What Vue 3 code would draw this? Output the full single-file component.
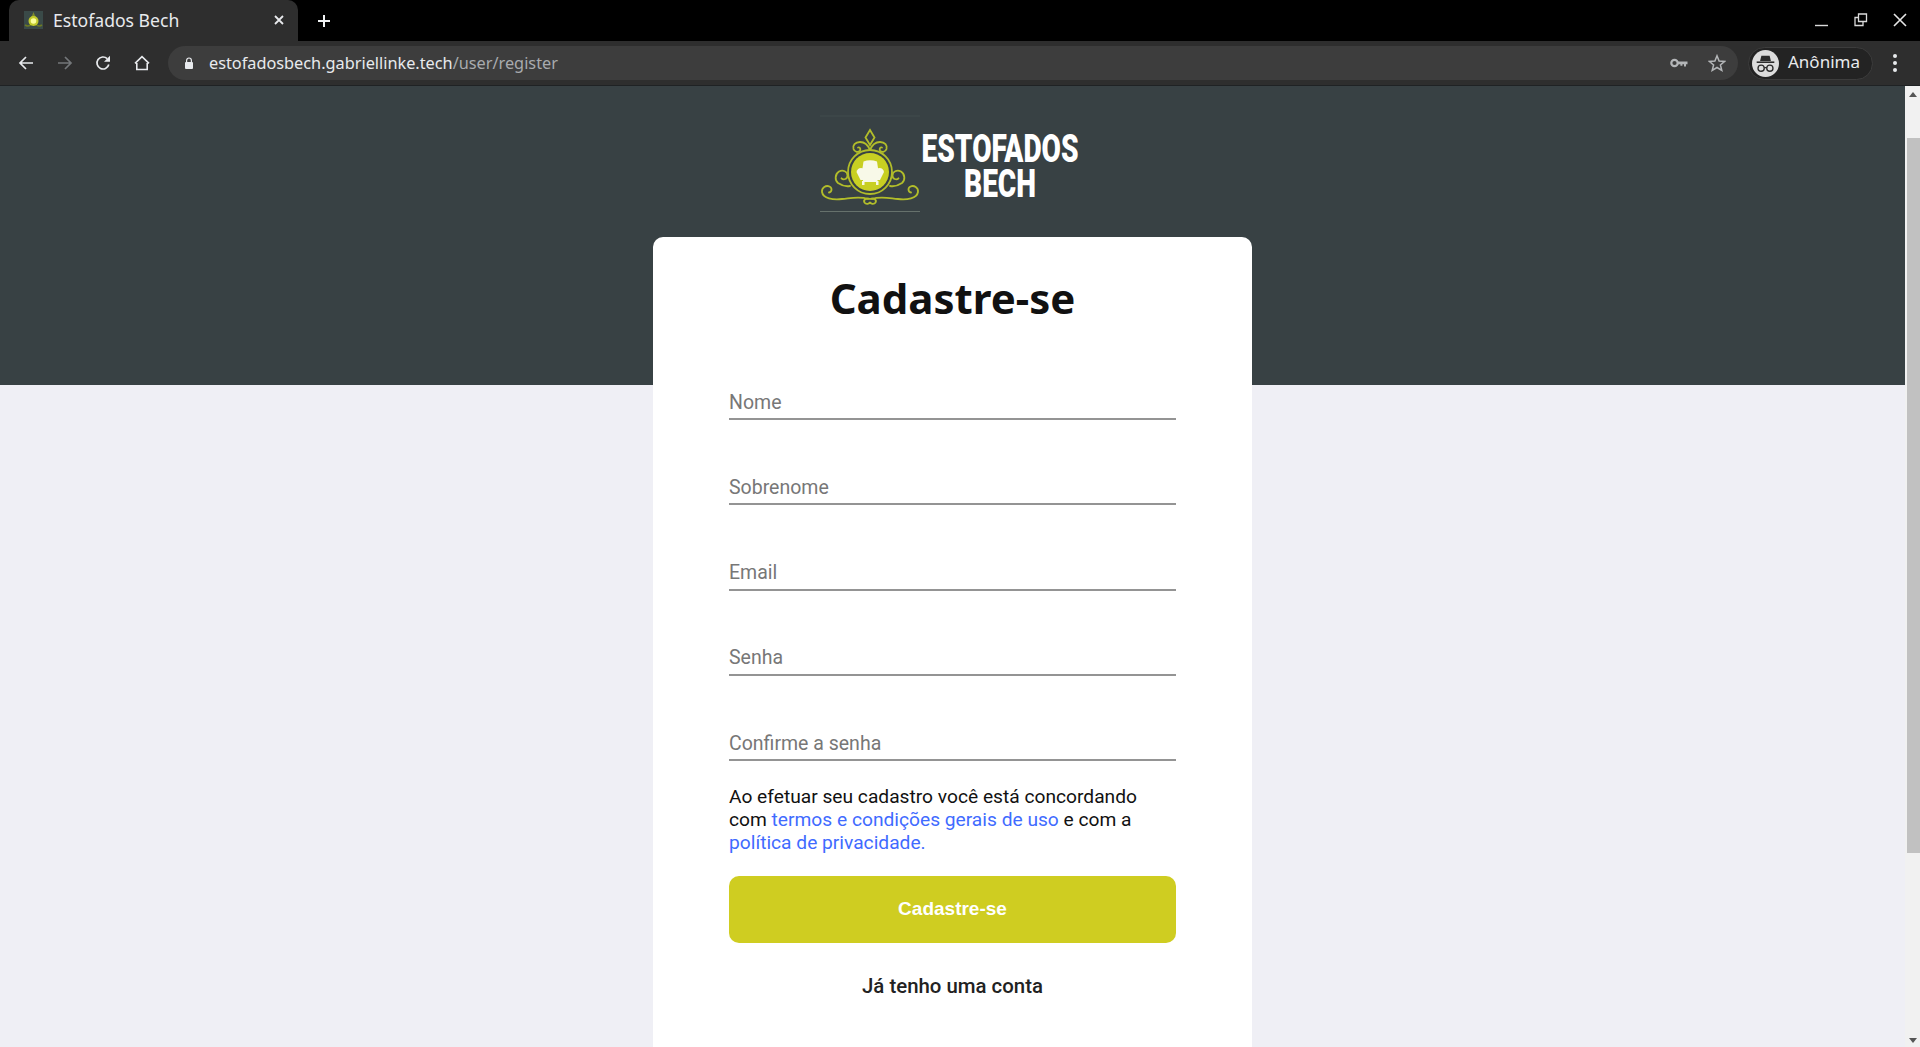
<script setup>
const fields = ['Nome', 'Sobrenome', 'Email', 'Senha', 'Confirme a senha']
</script>

<template>
  <div class="root">
    <div class="tabstrip">
      <div class="tab">
        <svg class="favicon" viewBox="0 0 19 18" width="19" height="18">
          <rect width="19" height="18" fill="#3a4a48" />
          <path d="M9.500 1 12 7H7Z" fill="#7d8c2c" />
          <path d="M1 14c4 3 5-1 8.500-1s4.500 4 8.500 1" fill="none" stroke="#6d7a24" stroke-width="1.600" />
          <circle cx="9.500" cy="10" r="5" fill="#c2cc2c" />
          <circle cx="9.500" cy="10" r="2.800" fill="#fbff9c" />
        </svg>
        <span class="tabtitle">Estofados Bech</span>
        <svg class="tabclose" viewBox="0 0 12 12" width="12" height="12"><path d="M2 2 10 10M10 2 2 10" stroke="#e8eaed" stroke-width="1.800" /></svg>
      </div>
      <svg class="newtab" viewBox="0 0 14 14" width="14" height="14"><path d="M7 1v12M1 7h12" stroke="#f1f3f4" stroke-width="2" /></svg>
      <div class="winctl">
        <svg viewBox="0 0 14 14" width="14" height="14"><path d="M0 12.500h13" stroke="#dadada" stroke-width="1.400" /></svg>
        <svg viewBox="0 0 14 14" width="14" height="14"><path d="M4.500 1h8v7.500h-8zM4.500 4.500h-3.500v8h8v-4" fill="none" stroke="#dadada" stroke-width="1.300" /></svg>
        <svg viewBox="0 0 14 14" width="14" height="14"><path d="M1 1 13 13M13 1 1 13" stroke="#e6e6e6" stroke-width="1.600" /></svg>
      </div>
    </div>

    <div class="toolbar">
      <svg class="tool" viewBox="0 0 16 16" width="16" height="16"><path d="M15 8H2M8 2 2 8l6 6" fill="none" stroke="#e8eaed" stroke-width="1.700" /></svg>
      <svg class="tool fwd" viewBox="0 0 16 16" width="16" height="16"><path d="M1 8h13M8 2l6 6-6 6" fill="none" stroke="#74777a" stroke-width="1.700" /></svg>
      <svg class="tool" viewBox="0 0 16 16" width="16" height="16"><path d="M13.800 9.500A6 6 0 1 1 12.200 3.700" fill="none" stroke="#e8eaed" stroke-width="1.700" /><path d="M15 .8v6H9z" fill="#e8eaed" /></svg>
      <svg class="tool" viewBox="0 0 16 16" width="16" height="16"><path d="M2.800 8v6.500h10.400V8M1 8.400 8 1.600l7 6.800" fill="none" stroke="#e8eaed" stroke-width="1.600" /></svg>
      <div class="omnibox">
        <svg viewBox="0 0 10 12" width="10" height="12"><path d="M2.600 5V3.400a2.400 2.400 0 0 1 4.800 0V5" fill="none" stroke="#e8eaed" stroke-width="1.200" /><rect x="1" y="5" width="8" height="7" rx="1" fill="#e8eaed" /></svg>
        <span class="url"><span class="host">estofadosbech.gabriellinke.tech</span><span class="path">/user/register</span></span>
        <svg class="key" viewBox="0 0 18 10" width="18" height="10"><circle cx="4.500" cy="5" r="3.200" fill="none" stroke="#b4b6b8" stroke-width="2.200" /><path d="M8 3.500h9.500v2.700H16v2.400h-2V6.200h-1.600v1.600h-2V6.200H8z" fill="#b4b6b8" /></svg>
        <svg class="star" viewBox="0 0 18 18" width="18" height="18"><path d="M9 1.800 11.100 7l5.600.4-4.300 3.600 1.400 5.400L9 13.500l-4.800 2.900 1.400-5.400-4.300-3.600L6.900 7z" fill="none" stroke="#b4b6b8" stroke-width="1.500" /></svg>
      </div>
      <div class="profile">
        <div class="avatar">
          <svg viewBox="0 0 26 26" width="27" height="27">
            <path d="M9 5.500h8l1.200 5H7.800z" fill="#2b2b2b" />
            <path d="M4.500 11h17v1.500h-17z" fill="#2b2b2b" />
            <circle cx="8.800" cy="17.500" r="3" fill="none" stroke="#2b2b2b" stroke-width="1.300" />
            <circle cx="17.200" cy="17.500" r="3" fill="none" stroke="#2b2b2b" stroke-width="1.300" />
            <path d="M11.800 17h2.400" stroke="#2b2b2b" stroke-width="1.200" />
          </svg>
        </div>
        <span class="anon">Anônima</span>
      </div>
      <div class="dots"><i></i><i></i><i></i></div>
    </div>

    <div class="viewport">
      <div class="page">
        <header class="hero">
          <div class="logo">
            <svg class="emblem" viewBox="0 0 100 98" width="100" height="98">
              <path d="M0 1h100" stroke="#414c4c" stroke-width="1" />
              <path d="M0 96.500h100" stroke="#66716c" stroke-width="1" />
              <g fill="none" stroke="#b2bd2a" stroke-width="1.800" stroke-linecap="round">
                <path d="M50 15 54.500 22.500 50 30 45.500 22.500Z" />
                <path d="M50 35c-2-5-5-8-10-8-5 0-7.500 3.500-6.500 7 1 3 5 4 6.500 1.500 1-2-.5-3.500-2-3" />
                <path d="M50 35c2-5 5-8 10-8 5 0 7.500 3.500 6.500 7-1 3-5 4-6.500 1.500-1-2 .5-3.500 2-3" />
                <circle cx="50" cy="57" r="22" stroke-width="1.800" />
                <path d="M30 71c-5 1-9-1-12-3-3.500-3-3-9 1-11.500 4-2 8.500 0 8.500 4 0 3.500-4 5-6 2.800" />
                <path d="M70 71c5 1 9-1 12-3 3.500-3 3-9-1-11.500-4-2-8.500 0-8.500 4 0 3.500 4 5 6 2.800" />
                <path d="M48 84c-8-3-16-1-26 0-9 1-19-.5-20-7-.5-4.500 4-7 7.500-5.500 3 1.500 2.500 5.500-.5 6" />
                <path d="M52 84c8-3 16-1 26 0 9 1 19-.5 20-7 .5-4.500-4-7-7.500-5.500-3 1.500-2.500 5.500.5 6" />
                <path d="M50 84c-4-1.500-7 1-5.500 3.500 1.500 2.300 5 1.500 5.500-.5.500 2 4 2.800 5.500.5 1.500-2.500-1.500-5-5.500-3.500" />
              </g>
              <circle cx="50" cy="57" r="19" fill="#c8cf22" />
              <g fill="#f8f9e8">
                <path d="M43.500 46.500q6.500-2.500 13.500 0l1.500 10H42z" />
                <path d="M36.500 57q1-4 4.500-4 3.500 0 3.500 3.500v8.500h-4z" />
                <path d="M64 57q-1-4-4.500-4-3.500 0-3.500 3.500v8.500h4z" />
                <rect x="43" y="56" width="14.500" height="11" />
                <rect x="42" y="66" width="2.500" height="4" />
                <rect x="56" y="66" width="2.500" height="4" />
              </g>
            </svg>
            <div class="wordmark"><span>ESTOFADOS</span><span>BECH</span></div>
          </div>
        </header>
        <main class="card">
          <h1>Cadastre-se</h1>
          <form class="form" @submit.prevent>
            <input v-for="field in fields" :key="field" class="field" type="text" :placeholder="field" />
            <p class="terms">Ao efetuar seu cadastro você está concordando com <a href="#">termos e condições gerais de uso</a> e com a <a href="#">política de privacidade.</a></p>
            <button class="submit" type="submit">Cadastre-se</button>
            <a class="login" href="#">Já tenho uma conta</a>
          </form>
        </main>
      </div>
      <div class="scrollbar">
        <div class="arrow up"></div>
        <div class="thumb"></div>
        <div class="arrow down"></div>
      </div>
    </div>
  </div>
</template>

<style>
html, body { margin: 0; height: 100%; overflow: hidden; }
</style>

<style scoped>
.root { width: 1920px; height: 1047px; display: flex; flex-direction: column; overflow: hidden; font-family: "Roboto", sans-serif; background: #efeff5; }
.tabstrip { height: 41px; background: #000; display: flex; align-items: center; flex-shrink: 0; }
.tab { width: 289px; height: 41px; margin-left: 9px; box-sizing: border-box; padding: 0 13px 2px 15px; background: #2e2e2e; border-radius: 10px 10px 0 0; display: flex; align-items: center; }
.favicon { margin: 0 10px 0 0; flex-shrink: 0; display: block; }
.tabtitle { flex: 1; font: 17.600px "Noto Sans", sans-serif; color: #e8eaed; }
.newtab { margin-left: 19px; }
.winctl { margin-left: auto; display: flex; gap: 25px; margin-right: 13px; padding-bottom: 2px; }
.toolbar { height: 44px; background: #2e2e2e; border-bottom: 1px solid #1f2224; display: flex; align-items: center; padding: 0 0 0 18px; flex-shrink: 0; }
.tool { margin-right: 23px; flex-shrink: 0; }
.tool.fwd { margin-right: 22px; }
.omnibox { width: 1570px; height: 34px; margin-left: -5px; box-sizing: border-box; padding: 0 12px 0 16px; border-radius: 17px; background: #3d3d3d; display: flex; align-items: center; flex-shrink: 0; }
.url { margin-left: 15px; padding-bottom: 1px; font: 16.300px "Noto Sans", sans-serif; flex: 1; }
.host { color: #e8eaed; }
.path { color: #a8abae; }
.key { margin-right: 20px; }
.profile { margin-left: 10px; width: 125px; height: 33px; box-sizing: border-box; padding-left: 3px; border: 1px solid #3c3c3c; border-radius: 17px; background: #232323; display: flex; align-items: center; gap: 9px; font: 17px "Noto Sans", sans-serif; color: #e8eaed; flex-shrink: 0; }
.anon { padding-bottom: 4px; }
.avatar { width: 27px; height: 27px; border-radius: 50%; background: #dcdcdc; flex-shrink: 0; }
.avatar svg { display: block; }
.dots { margin-left: 20px; display: flex; flex-direction: column; gap: 3px; }
.dots i { width: 4px; height: 4px; border-radius: 50%; background: #e8eaed; display: block; }
.viewport { flex: 1; display: flex; min-height: 0; }
.page { flex: 1; min-width: 0; position: relative; background: #efeff5; overflow: hidden; }
.hero { height: 299px; background: #384144; display: flex; justify-content: center; padding-top: 29px; box-sizing: border-box; }
.logo { display: flex; height: 98px; margin-right: 7px; }
.emblem { display: block; }
.wordmark { margin: 17px 0 0 2px; width: 156px; display: flex; flex-direction: column; align-items: center; font: 900 39px/35px "Roboto", sans-serif; color: #fff; }
.wordmark span { display: block; transform: scaleX(.72); white-space: nowrap; }
.card { position: relative; width: 599px; height: 900px; margin: -148px auto 0; box-sizing: border-box; padding: 35px 76px 0; background: #fff; border-radius: 10px 10px 0 0; }
h1 { margin: 0; text-align: center; font: 700 42px/52px "Noto Sans", sans-serif; color: #111; }
.form { margin-top: 54px; display: flex; flex-direction: column; }
.field { height: 32px; margin-bottom: 43.300px; padding: 8px 0 0; border: 0; border-bottom: 2px solid #949494; outline: 0; background: transparent; font: 19.500px "Roboto", sans-serif; color: #111; }
.field:nth-of-type(5) { margin-bottom: 0; }
.field::placeholder { color: #777; opacity: 1; }
.terms { margin: 23.500px 0 0; font: 19.200px/23.200px "Roboto", sans-serif; color: #111; }
.terms a { color: #3f6bff; text-decoration: none; }
.submit { margin-top: 22px; height: 67px; padding: 0 0 2px; border: 0; border-radius: 10px; background: #cfcd21; color: #fff; font: 700 19px "Liberation Sans", sans-serif; }
.login { margin-top: 30px; text-align: center; font: 500 20.400px/26px "Roboto", sans-serif; color: #222; text-decoration: none; }
.scrollbar { width: 15px; flex-shrink: 0; background: #f1f1f1; display: flex; flex-direction: column; align-items: center; }
.arrow { width: 0; height: 0; border-left: 4px solid transparent; border-right: 4px solid transparent; }
.arrow.up { margin-top: 6px; border-bottom: 5px solid #555; }
.arrow.down { margin-top: auto; margin-bottom: 4px; border-top: 5px solid #555; }
.thumb { width: 13px; height: 715px; margin-top: 41px; align-self: flex-end; background: #c1c1c1; }
</style>
